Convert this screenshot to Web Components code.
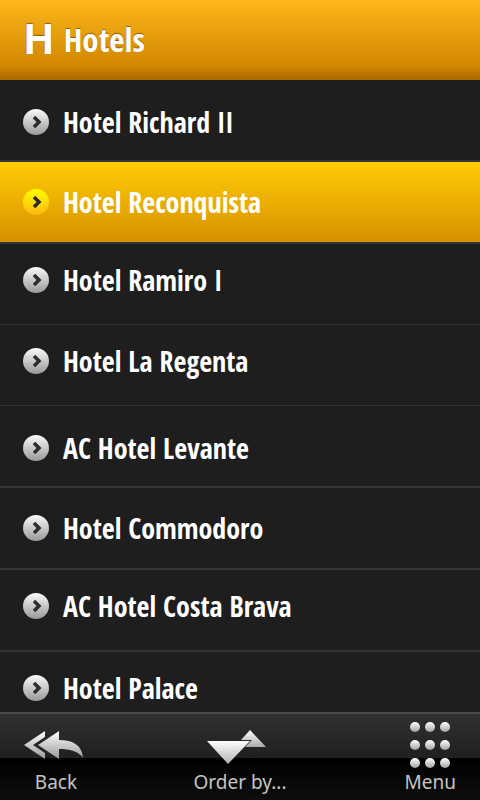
<!DOCTYPE html>
<html lang="en">
<head>
<meta charset="utf-8">
<meta name="viewport" content="width=device-width, initial-scale=1">
<title>Hotels</title>
<style>
  html, body { margin: 0; height: 100%; background: #1e1e1e; }
  body { --title-font: "Open Sans Condensed", "Roboto Condensed", "Open Sans", sans-serif; color: #fff; }
</style>
</head>
<body>
<hotel-app></hotel-app>

<template id="app-template">
  <style>
    :host { display: flex; flex-direction: column; height: 100vh; background: #1e1e1e; }
    hotel-list { flex: 1; min-height: 0; }
  </style>
  <app-header initial="H">Hotels</app-header>
  <hotel-list>
    <hotel-row>Hotel Richard II</hotel-row>
    <hotel-row selected>Hotel Reconquista</hotel-row>
    <hotel-row thin>Hotel Ramiro I</hotel-row>
    <hotel-row thin>Hotel La Regenta</hotel-row>
    <hotel-row>AC Hotel Levante</hotel-row>
    <hotel-row>Hotel Commodoro</hotel-row>
    <hotel-row>AC Hotel Costa Brava</hotel-row>
    <hotel-row>Hotel Palace</hotel-row>
  </hotel-list>
  <tool-bar>
    <tool-button>
      <svg slot="icon" width="64" height="48" viewBox="0 0 64 48" aria-hidden="true">
        <defs><linearGradient id="b" gradientUnits="userSpaceOnUse" x1="0" y1="11" x2="0" y2="39"><stop offset="0" stop-color="#fff"/><stop offset="1" stop-color="#999"/></linearGradient></defs>
        <path fill="url(#b)" d="M0 25 21 11v6L9 25l12 8v6ZM14 25 35 11v9c14 0 23 5 24 18-5-7-13-9-24-9v10Z"/>
      </svg>
      Back
    </tool-button>
    <tool-button>
      <svg slot="icon" width="66" height="48" viewBox="0 0 66 48" aria-hidden="true">
        <defs><linearGradient id="u" gradientUnits="userSpaceOnUse" x1="0" y1="10" x2="0" y2="27"><stop offset="0" stop-color="#fff"/><stop offset="1" stop-color="#aaa"/></linearGradient>
        <linearGradient id="d" gradientUnits="userSpaceOnUse" x1="0" y1="21" x2="0" y2="44"><stop offset="0" stop-color="#fff"/><stop offset="1" stop-color="#b0b0b0"/></linearGradient></defs>
        <path fill="url(#u)" d="M43 10 59 27H38l7-7H34Z"/>
        <path fill="url(#d)" d="M0 21H43L21 44Z"/>
      </svg>
      Order by...
    </tool-button>
    <tool-button>
      <svg slot="icon" width="40" height="48" viewBox="0 0 40 48" aria-hidden="true">
        <defs><linearGradient id="m" x1="0" y1="0" x2="0" y2="1"><stop offset="0" stop-color="#fff"/><stop offset="1" stop-color="#a2a2a2"/></linearGradient></defs>
        <g fill="url(#m)">
          <circle cx="5" cy="7" r="5"/><circle cx="20" cy="7" r="5"/><circle cx="35" cy="7" r="5"/>
          <circle cx="5" cy="25" r="5"/><circle cx="20" cy="25" r="5"/><circle cx="35" cy="25" r="5"/>
          <circle cx="5" cy="43" r="5"/><circle cx="20" cy="43" r="5"/><circle cx="35" cy="43" r="5"/>
        </g>
      </svg>
      Menu
    </tool-button>
  </tool-bar>
</template>

<template id="header-template">
  <style>
    :host { display: block; }
    header { display: flex; align-items: center; gap: 10px; height: 80px; padding: 0 24px; box-sizing: border-box;
      background: linear-gradient(#fdb71a, #d08600 84%, #a66a00); text-shadow: 0 -1px 1px rgba(90, 55, 0, .6); }
    span { font: 700 42px/80px Roboto, sans-serif; }
    h1 { margin: 0; font: 700 33px/80px var(--title-font); }
  </style>
  <header><span aria-hidden="true"></span><h1><slot></slot></h1></header>
</template>

<template id="list-template">
  <style>
    :host { display: block; overflow-y: auto; scrollbar-width: none; }
    ::slotted(:nth-child(4n+1)) { --row-top: 4px; }
    ::slotted(:nth-child(4n+3)), ::slotted(:nth-child(4n+4)) { --row-bottom: 8px; }
  </style>
  <slot></slot>
</template>

<template id="row-template">
  <style>
    :host { display: block; border-bottom: 2px solid #343434; }
    :host([thin]) { border-bottom-width: 1px; }
    a { display: flex; align-items: center; gap: 14px; height: 80px; box-sizing: border-box;
      padding: var(--row-top, 0) 22px var(--row-bottom, 0); color: #fff; text-decoration: none; font: 700 28px/40px var(--title-font); }
    :host([selected]) a { background: linear-gradient(#ffcc06, #d69100); }
    svg { flex: none; --disc-top: #fafafa; --disc-bottom: #999; }
    :host([selected]) svg { --disc-top: #ffff00; --disc-bottom: #fdb813; }
  </style>
  <a href="#">
    <svg width="27" height="28" viewBox="0 0 27 28" aria-hidden="true">
      <defs><linearGradient id="g" x1="0" y1="0" x2="0" y2="1"><stop offset="0" style="stop-color:var(--disc-top)"/><stop offset="1" style="stop-color:var(--disc-bottom)"/></linearGradient></defs>
      <circle cx="14" cy="14" r="13" fill="url(#g)"/>
      <path d="m12 9 5 5-5 5" fill="none" stroke="#2d2b28" stroke-width="3.500"/>
    </svg>
    <slot></slot>
  </a>
</template>

<template id="bar-template">
  <style>
    :host { display: block; }
    nav { display: grid; grid-template-columns: 1fr auto 1fr; height: 88px; box-sizing: border-box; padding: 0 24px;
      border-top: 2px solid #484848; background: linear-gradient(#303030, #202020 44px, #000 44px, #0e0e0e); }
    ::slotted(:first-child) { justify-self: start; }
    ::slotted(:last-child) { justify-self: end; }
  </style>
  <nav><slot></slot></nav>
</template>

<template id="button-template">
  <style>
    :host { display: block; }
    button { display: flex; flex-direction: column; align-items: center; height: 86px; padding: 6px 0 0; border: 0;
      background: none; color: #c4c4c4; font: 400 19px/28px "Noto Sans", "Open Sans", sans-serif; cursor: pointer; }
  </style>
  <button type="button"><slot name="icon"></slot><span><slot></slot></span></button>
</template>

<script>
  const define = (name, templateId, setup) => customElements.define(name, class extends HTMLElement {
    constructor() {
      super();
      const root = this.attachShadow({ mode: "open" });
      root.append(document.getElementById(templateId).content.cloneNode(true));
    }
    connectedCallback() { if (setup) setup(this); }
  });
  define("app-header", "header-template", el => { el.shadowRoot.querySelector("span").textContent = el.getAttribute("initial"); });
  define("hotel-list", "list-template");
  define("hotel-row", "row-template");
  define("tool-bar", "bar-template");
  define("tool-button", "button-template");
  define("hotel-app", "app-template");
</script>
</body>
</html>
